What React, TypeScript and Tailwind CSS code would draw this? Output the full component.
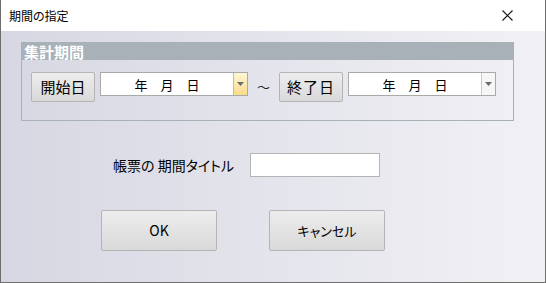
import React from 'react';

const jp = { fontFamily: '"Noto Sans CJK JP", "Noto Sans", sans-serif' };

function Arrow() {
  return (
    <svg width="7" height="5" viewBox="0 0 7 5">
      <path d="M0 0 H7 L3.5 4 Z" fill="#6a6a6a" />
    </svg>
  );
}

function DateBox({ active }: { active?: boolean }) {
  return (
    <div className="flex h-[24px] w-[148px] border border-[#a9a9a9] bg-white">
      <div className="flex flex-1 items-center justify-center text-[13px] leading-none text-black [font-feature-settings:normal]">
        年　月　日
      </div>
      <div
        className={
          active
            ? 'flex w-[14px] items-center justify-center border-l border-[#e6bd3c] bg-gradient-to-b from-[#fff6d6] to-[#f8dc86]'
            : 'flex w-[14px] items-center justify-center border-l border-[#c8c8c8] bg-[#f6f6f6]'
        }
      >
        <Arrow />
      </div>
    </div>
  );
}

function Btn({ children, className }: { children: React.ReactNode; className: string }) {
  return (
    <div
      className={`flex items-center justify-center rounded-[2px] border border-[#b4b4b4] bg-gradient-to-b from-[#ededed] to-[#d9d9d9] text-black ${className}`}
    >
      {children}
    </div>
  );
}

export default function App() {
  return (
    <div
      className="flex h-[283px] w-[546px] flex-col border-x border-b border-[#6e6e6e] bg-white [font-feature-settings:'palt']"
      style={jp}
    >
      {/* タイトルバー */}
      <div className="flex h-[31px] shrink-0 items-center justify-between bg-white pl-[8px] pr-[32px]">
        <span className="text-[12px] text-black">期間の指定</span>
        <svg width="11" height="11" viewBox="0 0 11 11">
          <path d="M0.5 0.5 L10.5 10.5 M10.5 0.5 L0.5 10.5" stroke="#111" strokeWidth="1.1" />
        </svg>
      </div>

      {/* 本体 */}
      <div className="flex flex-1 flex-col bg-gradient-to-r from-[#d7d7e3] to-[#f1f1f5]">
        {/* 集計期間 */}
        <div className="ml-[20px] mt-[11px] h-[79px] w-[493px] border border-t-0 border-[#a8b0b8]">
          <div className="flex h-[18px] items-center bg-[#a8b0b8] pl-[2px] text-[15px] font-bold leading-none text-white">
            集計期間
          </div>
          <div className="flex items-start pl-[9px] pt-[12px]">
            <Btn className="h-[30px] w-[64px] text-[15px]">開始日</Btn>
            <div className="ml-[5px]">
              <DateBox active />
            </div>
            <div className="flex h-[30px] w-[31px] items-center justify-center text-[13px] text-[#222]">～</div>
            <Btn className="h-[30px] w-[64px] text-[15px] tracking-[1px]">終了日</Btn>
            <div className="ml-[5px]">
              <DateBox />
            </div>
          </div>
        </div>

        {/* 帳票の期間タイトル */}
        <div className="mt-[32px] flex items-center pl-[112px]">
          <span className="w-[137px] text-[14px] text-black">帳票の 期間タイトル</span>
          <div className="h-[24px] w-[130px] border border-[#b4b4b4] bg-white" />
        </div>

        {/* ボタン */}
        <div className="mt-[33px] flex gap-[52px] pl-[100px]">
          <Btn className="h-[41px] w-[116px] text-[14px]">OK</Btn>
          <Btn className="h-[41px] w-[116px] text-[13px]">キャンセル</Btn>
        </div>
      </div>
    </div>
  );
}
